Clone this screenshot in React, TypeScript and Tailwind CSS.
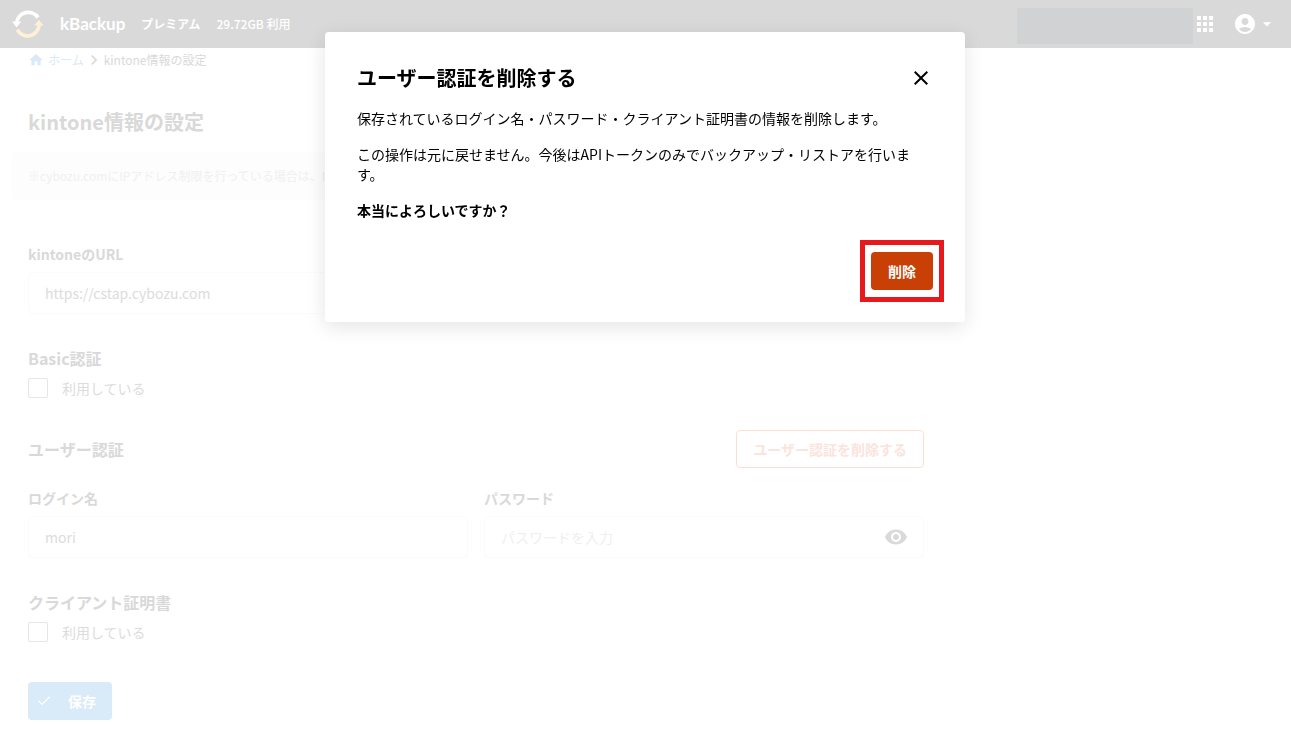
import { useState } from "react";
import {
  MdAccountCircle,
  MdApps,
  MdArrowDropDown,
  MdChevronRight,
  MdClose,
  MdHome,
  MdVisibility,
} from "react-icons/md";
import { Check } from "lucide-react";

function Logo() {
  return (
    <svg width="32" height="32" viewBox="0 0 32 32" fill="none" aria-hidden="true">
      <path d="M4.7 14.5A11.7 11.7 0 0 1 26 9.6" stroke="#fff" strokeWidth="3.8" />
      <path d="M0 13.4h9.3L4.6 19.6z" fill="#fff" />
      <path d="M5.2 21.6A11.7 11.7 0 0 0 27.2 16.8" stroke="#fdf0d6" strokeWidth="3.8" />
      <path d="M22 17.4h9.7L27 12z" fill="#fdf0d6" />
    </svg>
  );
}

function Header() {
  return (
    <header className="flex h-12 items-center gap-4 bg-[#d9d9d9] pl-3 pr-3.5 text-white">
      <Logo />
      <span className="font-['Lato',sans-serif] text-[17px] font-bold">kBackup</span>
      <span className="text-xs font-bold">プレミアム</span>
      <span className="text-xs font-medium">29.72GB 利用</span>
      <div className="ml-auto flex items-center">
        <div className="mt-1 h-9 w-44 bg-[#d0d2d4]" />
        <button type="button" aria-label="アプリ" className="mr-4">
          <MdApps size={24} />
        </button>
        <button type="button" aria-label="アカウント" className="flex items-center">
          <MdAccountCircle size={24} />
          <MdArrowDropDown size={20} />
        </button>
      </div>
    </header>
  );
}

function Breadcrumb() {
  return (
    <nav className="flex h-6 items-center text-xs">
      <a href="#home" className="flex items-center gap-1 text-[#d8eafa]">
        <MdHome size={16} />
        ホーム
      </a>
      <MdChevronRight size={20} />
      <span>kintone情報の設定</span>
    </nav>
  );
}

const labelClass = "block text-sm/5 font-bold";

const inputClass =
  "h-[42px] w-full rounded border border-[#fbfbfb] px-4 text-sm text-[#dcdcdc] placeholder:text-[#efefef] outline-none";

function CheckRow({ id }: { id: string }) {
  const [checked, setChecked] = useState(false);
  return (
    <div className="mt-2 flex h-5 items-center gap-3.5">
      <input
        id={id}
        type="checkbox"
        checked={checked}
        onChange={(e) => setChecked(e.target.checked)}
        className="size-5 appearance-none rounded-xs border border-[#e6e6e6] checked:bg-[#d8eafa]"
      />
      <label htmlFor={id} className="text-sm text-[#dcdcdc]">
        利用している
      </label>
    </div>
  );
}

function SettingsForm() {
  const [url, setUrl] = useState("https://cstap.cybozu.com");
  const [login, setLogin] = useState("mori");
  const [password, setPassword] = useState("");

  return (
    <form onSubmit={(e) => e.preventDefault()}>
      <div className="mt-11 w-full max-w-[440px]">
        <label htmlFor="url" className={labelClass}>
          kintoneのURL
        </label>
        <input
          id="url"
          value={url}
          onChange={(e) => setUrl(e.target.value)}
          className={`mt-2 ${inputClass}`}
        />
      </div>

      <h2 className="mt-8 text-base font-bold">Basic認証</h2>
      <CheckRow id="basic" />

      <div className="mt-8 flex items-center justify-between">
        <h2 className="text-base font-bold">ユーザー認証</h2>
        <button
          type="button"
          className="h-[38px] rounded border border-[#fbdfd6] px-4 text-sm font-bold text-[#fae4dc]"
        >
          ユーザー認証を削除する
        </button>
      </div>

      <div className="mt-5 grid grid-cols-2 gap-4">
        <div>
          <label htmlFor="login" className={labelClass}>
            ログイン名
          </label>
          <input
            id="login"
            value={login}
            onChange={(e) => setLogin(e.target.value)}
            className={`mt-2 ${inputClass}`}
          />
        </div>
        <div>
          <label htmlFor="password" className={labelClass}>
            パスワード
          </label>
          <div className="relative mt-2">
            <input
              id="password"
              type="password"
              placeholder="パスワードを入力"
              value={password}
              onChange={(e) => setPassword(e.target.value)}
              className={inputClass}
            />
            <button
              type="button"
              aria-label="パスワードを表示"
              className="absolute inset-y-0 right-4"
            >
              <MdVisibility size={24} />
            </button>
          </div>
        </div>
      </div>

      <h2 className="mt-8 text-base font-bold">クライアント証明書</h2>
      <CheckRow id="certificate" />

      <button
        type="submit"
        className="mt-10 flex h-[38px] items-center gap-4 rounded bg-[#d9eaf9] pl-2 pr-4 text-sm font-bold text-white"
      >
        <Check size={16} strokeWidth={1.8} />
        保存
      </button>
    </form>
  );
}

function DeleteDialog() {
  return (
    <div className="fixed inset-x-0 top-8 flex justify-center pr-px">
      <div
        role="dialog"
        aria-modal="true"
        aria-labelledby="dialog-title"
        className="w-full max-w-[640px] rounded bg-white p-8 text-sm text-black shadow-[0_5px_20px_rgba(0,0,0,0.11)]"
      >
        <div className="flex items-center justify-between">
          <h2 id="dialog-title" className="text-xl font-bold">
            ユーザー認証を削除する
          </h2>
          <button type="button" aria-label="閉じる">
            <MdClose size={24} />
          </button>
        </div>
        <p className="mt-4">
          保存されているログイン名・パスワード・クライアント証明書の情報を削除します。
        </p>
        <p className="mt-4">
          この操作は元に戻せません。今後はAPIトークンのみでバックアップ・リストアを行います。
        </p>
        <p className="mt-4 font-bold">本当によろしいですか？</p>
        <div className="mt-8 flex justify-end">
          <div className="relative">
            <button
              type="button"
              className="block h-[38px] rounded bg-[#c94006] px-[17px] text-sm font-bold text-white"
            >
              削除
            </button>
            <span className="pointer-events-none absolute -inset-x-[11px] -inset-y-3 border-5 border-[#e8191c]" />
          </div>
        </div>
      </div>
    </div>
  );
}

export default function App() {
  return (
    <div
      lang="ja"
      className="min-h-screen bg-white font-['Noto_Sans_CJK_JP',sans-serif] text-[#d9d9d9]"
    >
      <Header />
      <main className="max-w-[952px] px-7 pb-6">
        <Breadcrumb />
        <h1 className="mt-9 text-xl font-bold">kintone情報の設定</h1>
        <p className="-mx-4 mt-4 flex h-12 items-center rounded bg-[#fdfdfd] px-4 text-xs text-[#f0f0f0]">
          ※cybozu.comにIPアドレス制限を行っている場合は、IP
        </p>
        <SettingsForm />
      </main>
      <DeleteDialog />
    </div>
  );
}
